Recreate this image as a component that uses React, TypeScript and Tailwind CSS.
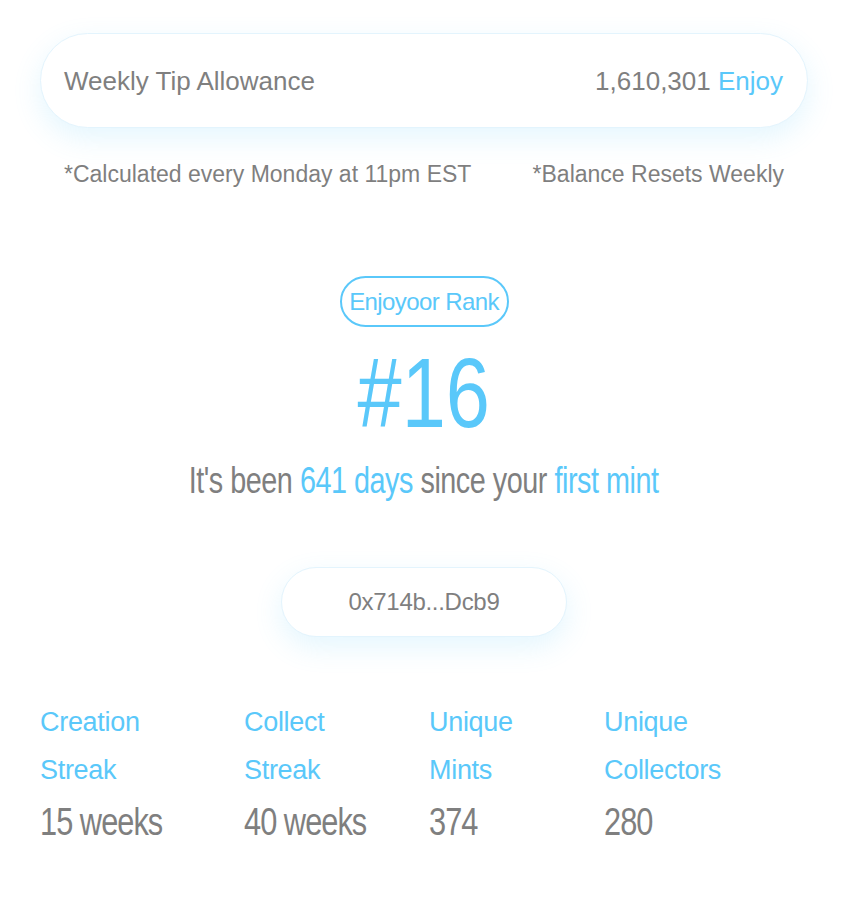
import React from "react";

const sans = "font-['Liberation_Sans',Arial,sans-serif]";

export default function App() {
  return (
    <div className={`min-h-[900px] w-[850px] bg-white ${sans}`}>
      <div className="ml-10 w-[768px] pt-[33px] flex flex-col">
        <div className="h-[95px] rounded-full border border-[#e3f4fd] bg-white shadow-[0_10px_28px_rgba(90,200,250,0.16)] flex items-center justify-between pl-[23px] pr-6 pt-[2px] text-[26px] text-[#7f7f7f]">
          <span>Weekly Tip Allowance</span>
          <span>
            1,610,301 <span className="text-[#5ac8fa]">Enjoy</span>
          </span>
        </div>
        <div className="mt-[32px] flex justify-between px-6 text-[23px] leading-[28px] text-[#7f7f7f]">
          <span>*Calculated every Monday at 11pm EST</span>
          <span>*Balance Resets Weekly</span>
        </div>

        <div className="mt-[88px] flex flex-col items-center">
          <div className="h-[51px] w-[169px] rounded-full border-2 border-[#5ac8fa] flex items-center justify-center text-[24px] tracking-[-0.6px] text-[#5ac8fa]">
            Enjoyoor Rank
          </div>
          <div className="mt-[17px] text-[98px] leading-none text-[#5ac8fa] scale-x-[0.81]">#16</div>
          <div className="mt-[17px] text-[36px] leading-[44px] tracking-[-0.6px] text-[#7f7f7f] whitespace-nowrap scale-x-[0.8]">
            It's been <span className="text-[#5ac8fa]">641 days</span> since your{" "}
            <span className="text-[#5ac8fa]">first mint</span>
          </div>
          <div className="mt-[64px] h-[70px] w-[286px] rounded-full border border-[#e3f4fd] bg-white shadow-[0_10px_28px_rgba(90,200,250,0.16)] flex items-center justify-center text-[24px] tracking-[-0.3px] text-[#7f7f7f]">
            0x714b...Dcb9
          </div>
        </div>

        <div className="mt-[61px] flex">
          {[
            { a: "Creation", b: "Streak", v: "15 weeks", w: "w-[204px]" },
            { a: "Collect", b: "Streak", v: "40 weeks", w: "w-[185px]" },
            { a: "Unique", b: "Mints", v: "374", w: "w-[175px]" },
            { a: "Unique", b: "Collectors", v: "280", w: "w-[180px]" },
          ].map((s) => (
            <div key={s.a + s.b} className={`${s.w} flex flex-col items-start`}>
              <span className="text-[27px] leading-[48px] tracking-[-0.3px] text-[#5ac8fa]">{s.a}</span>
              <span className="text-[27px] leading-[48px] tracking-[-0.3px] text-[#5ac8fa]">{s.b}</span>
              <span className="mt-[6px] text-[38px] leading-[44px] tracking-[-1.2px] text-[#7f7f7f] whitespace-nowrap origin-left scale-x-[0.81]">
                {s.v}
              </span>
            </div>
          ))}
        </div>
      </div>
    </div>
  );
}
